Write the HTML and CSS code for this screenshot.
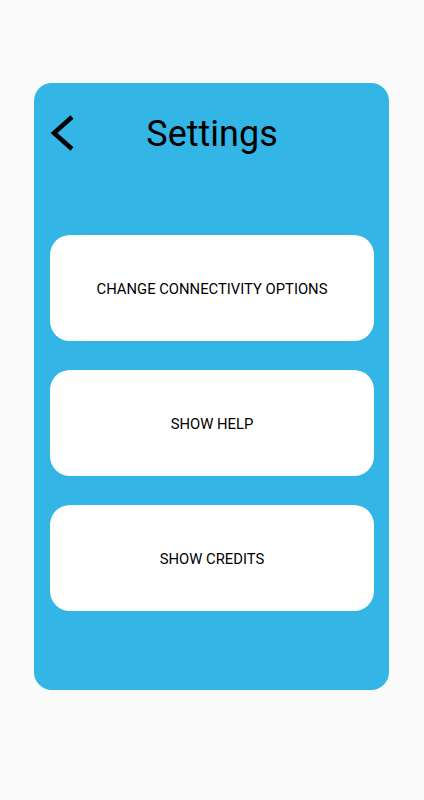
FILE: index.html
```html
<!DOCTYPE html>
<html lang="en">
<head>
    <meta charset="UTF-8">
    <meta name="viewport" content="width=device-width, initial-scale=1.0">
    <title>Settings</title>
    <link rel="stylesheet" href="styles.css">
</head>
<body>
    <div class="card">
        <div class="header">
            <button class="back" type="button" aria-label="Back">
                <svg width="28" height="40" viewBox="0 0 28 40">
                    <polyline points="22,4 4,20 22,36" fill="none" stroke="#000" stroke-width="4.5"></polyline>
                </svg>
            </button>
            <h1>Settings</h1>
            <div></div>
        </div>

        <div class="options">
            <button class="option" type="button">Change connectivity options</button>
            <button class="option" type="button">Show help</button>
            <button class="option" type="button">Show credits</button>
        </div>
    </div>
</body>
</html>
```

FILE: styles.css
```css
body {
    margin: 0;
    background-color: #fafafa;
    font-family: Roboto, "Liberation Sans", sans-serif;
}

.card {
    width: 355px;
    margin: 83px 0 0 34px;
    height: 607px;
    box-sizing: border-box;
    padding: 27px 15px 0 16px;
    background-color: #33b5e5;
    border-radius: 18px;
}

.header {
    display: grid;
    grid-template-columns: 1fr auto 1fr;
    align-items: center;
    height: 42px;
}

.back {
    background: none;
    border: none;
    padding: 0;
    width: 28px;
    height: 40px;
    cursor: pointer;
}

.back svg {
    display: block;
}

.header h1 {
    margin: 0;
    padding-top: 3px;
    font-size: 36px;
    font-weight: 400;
    color: #000;
}

.options {
    display: flex;
    flex-direction: column;
    gap: 29px;
    margin-top: 83px;
}

.option {
    height: 106px;
    padding-top: 2px;
    background-color: #fff;
    border: none;
    border-radius: 20px;
    font-family: Roboto, "Liberation Sans", sans-serif;
    font-size: 14.8px;
    text-transform: uppercase;
    color: #000;
    cursor: pointer;
}
```
